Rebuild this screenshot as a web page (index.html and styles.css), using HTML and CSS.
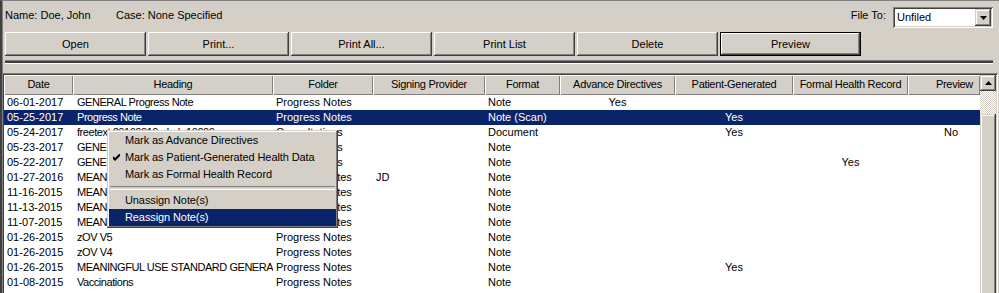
FILE: index.html
```html
<!DOCTYPE html>
<html>
<head>
<meta charset="utf-8">
<link rel="stylesheet" href="styles.css">
</head>
<body>
<div class="window">
  <div class="topbar">
    <span class="lbl name">Name: Doe, John</span>
    <span class="lbl case">Case: None Specified</span>
    <span class="spacer"></span>
    <span class="lbl fileto">File To:</span>
    <div class="combo">
      <span class="combo-text">Unfiled</span>
      <span class="combo-btn"><svg width="7" height="4" viewBox="0 0 7 4"><polygon points="0,0 7,0 3.5,4" fill="#000"/></svg></span>
    </div>
  </div>
  <div class="buttons">
    <button class="btn">Open</button>
    <button class="btn">Print...</button>
    <button class="btn">Print All...</button>
    <button class="btn">Print List</button>
    <button class="btn">Delete</button>
    <button class="btn default">Preview</button>
  </div>
  <div class="splitter"></div>
  <div class="list">
    <div class="list-main">
      <div class="row header">
        <span>Date</span><span>Heading</span><span>Folder</span><span>Signing Provider</span><span>Format</span><span>Advance Directives</span><span>Patient-Generated</span><span>Formal Health Record</span><span class="hprev">Preview</span>
      </div>
      <div class="row"><span>06-01-2017</span><span class="hd">GENERAL Progress Note</span><span>Progress Notes</span><span></span><span>Note</span><span class="c">Yes</span><span class="c"></span><span class="c"></span><span class="pv"></span></div>
      <div class="row sel"><span>05-25-2017</span><span class="hd">Progress Note</span><span>Progress Notes</span><span></span><span>Note (Scan)</span><span class="c"></span><span class="c">Yes</span><span class="c"></span><span class="pv"></span></div>
      <div class="row"><span>05-24-2017</span><span class="hd">freetext 20160010 - Lab 10000</span><span>Consultations</span><span></span><span>Document</span><span class="c"></span><span class="c">Yes</span><span class="c"></span><span class="pv">No</span></div>
      <div class="row"><span>05-23-2017</span><span class="hd">GENERAL Progress Note</span><span>Consultations</span><span></span><span>Note</span><span class="c"></span><span class="c"></span><span class="c"></span><span class="pv"></span></div>
      <div class="row"><span>05-22-2017</span><span class="hd">GENERAL Progress Note</span><span>Consultations</span><span></span><span>Note</span><span class="c"></span><span class="c"></span><span class="c">Yes</span><span class="pv"></span></div>
      <div class="row"><span>01-27-2016</span><span class="hd">MEANINGFUL USE STANDARD GENERA</span><span>Progress Notes</span><span>JD</span><span>Note</span><span class="c"></span><span class="c"></span><span class="c"></span><span class="pv"></span></div>
      <div class="row"><span>11-16-2015</span><span class="hd">MEANINGFUL USE STANDARD GENERA</span><span>Progress Notes</span><span></span><span>Note</span><span class="c"></span><span class="c"></span><span class="c"></span><span class="pv"></span></div>
      <div class="row"><span>11-13-2015</span><span class="hd">MEANINGFUL USE STANDARD GENERA</span><span>Progress Notes</span><span></span><span>Note</span><span class="c"></span><span class="c"></span><span class="c"></span><span class="pv"></span></div>
      <div class="row"><span>11-07-2015</span><span class="hd">MEANINGFUL USE STANDARD GENERA</span><span>Progress Notes</span><span></span><span>Note</span><span class="c"></span><span class="c"></span><span class="c"></span><span class="pv"></span></div>
      <div class="row"><span>01-26-2015</span><span class="hd">zOV V5</span><span>Progress Notes</span><span></span><span>Note</span><span class="c"></span><span class="c"></span><span class="c"></span><span class="pv"></span></div>
      <div class="row"><span>01-26-2015</span><span class="hd">zOV V4</span><span>Progress Notes</span><span></span><span>Note</span><span class="c"></span><span class="c"></span><span class="c"></span><span class="pv"></span></div>
      <div class="row"><span>01-26-2015</span><span class="hd">MEANINGFUL USE STANDARD GENERA</span><span>Progress Notes</span><span></span><span>Note</span><span class="c"></span><span class="c">Yes</span><span class="c"></span><span class="pv"></span></div>
      <div class="row"><span>01-08-2015</span><span class="hd">Vaccinations</span><span>Progress Notes</span><span></span><span>Note</span><span class="c"></span><span class="c"></span><span class="c"></span><span class="pv"></span></div>
    </div>
    <div class="scrollbar">
      <div class="sb-btn"><svg width="7" height="4" viewBox="0 0 7 4"><polygon points="3.5,0 7,4 0,4" fill="#000"/></svg></div>
      <div class="sb-track"></div>
      <div class="sb-thumb"></div>
    </div>
  </div>
  <div class="menu">
    <div class="mi">Mark as Advance Directives</div>
    <div class="mi"><svg class="check" width="7" height="7" viewBox="0 0 7 7"><path d="M0 2 L2 4 L7 -1 L7 2 L2 7 L0 5 Z" fill="#000"/></svg>Mark as Patient-Generated Health Data</div>
    <div class="mi">Mark as Formal Health Record</div>
    <div class="msep"></div>
    <div class="mi">Unassign Note(s)</div>
    <div class="mi hl">Reassign Note(s)</div>
  </div>
</div>
</body>
</html>
```

FILE: styles.css
```css
* { box-sizing: border-box; }
html, body { margin: 0; padding: 0; }
body {
  width: 999px;
  height: 293px;
  overflow: hidden;
  background: #d4d0c8;
  font-family: "Liberation Sans", Arial, sans-serif;
  font-size: 11px;
  color: #000;
}
.window {
  position: relative;
  width: 999px;
  height: 293px;
  border-top: 1px solid #808080;
  border-left: 2px solid #404040;
  box-shadow: inset 1px 0 #808080;
}
.topbar {
  display: flex;
  align-items: flex-start;
  height: 31px;
  padding: 0 6px 0 3px;
}
.lbl { line-height: 13px; margin-top: 8px; white-space: nowrap; }
.name { width: 111px; }
.spacer { flex: 1; }
.fileto { margin-right: 7px; }
.combo {
  margin-top: 6px;
  width: 100px;
  height: 21px;
  background: #fff;
  display: flex;
  align-items: center;
  padding: 2px;
  box-shadow: inset 1px 1px #808080, inset -1px -1px #fff, inset 2px 2px #404040, inset -2px -2px #d4d0c8;
}
.combo-text { flex: 1; padding-left: 2px; line-height: 13px; }
.combo-btn {
  width: 16px;
  height: 17px;
  background: #d4d0c8;
  display: flex;
  align-items: center;
  justify-content: center;
  box-shadow: inset -1px -1px #404040, inset 1px 1px #d4d0c8, inset -2px -2px #808080, inset 2px 2px #fff;
}
.buttons {
  display: flex;
  gap: 2px;
  padding-left: 3px;
  height: 24px;
}
.btn {
  width: 141px;
  height: 24px;
  margin: 0;
  padding: 0;
  border: 0;
  background: #d4d0c8;
  font-family: inherit;
  font-size: 11px;
  color: #000;
  box-shadow: inset -1px -1px #404040, inset 1px 1px #fff, inset -2px -2px #808080, inset 2px 2px #d4d0c8;
}
.btn.default {
  box-shadow: inset 0 0 0 1px #000, inset -2px -2px #404040, inset 2px 2px #fff, inset -3px -3px #808080;
}
.splitter {
  margin: 4px 6px 9px 3px;
  height: 4px;
  border-top: 1px solid #808080;
  border-bottom: 1px solid #fff;
  background: #404040;
}
.list {
  display: flex;
  width: 996px;
  height: 230px;
  padding: 2px;
  background: #fff;
  box-shadow: inset 1px 1px #808080, inset -1px -1px #fff, inset 2px 2px #404040, inset -2px -2px #d4d0c8;
}
.list-main { width: 976px; }
.row {
  display: grid;
  grid-template-columns: 69px 200px 100px 112px 75px 115px 118px 115px 72px;
  height: 15px;
  line-height: 15px;
}
.row > span {
  overflow: hidden;
  white-space: nowrap;
  padding-left: 3px;
}
.row > span.hd { padding-left: 4px; letter-spacing: -0.45px; }
.row > span.c { text-align: center; padding-left: 0; }
.row > span.pv { text-align: right; padding-right: 22px; }
.row.sel { background: #0a246a; color: #fff; }
.row.header {
  height: 20px;
  line-height: 19px;
  background: #d4d0c8;
}
.row.header > span {
  text-align: center;
  padding-left: 0;
  letter-spacing: -0.3px;
  box-shadow: inset 1px 1px #fff, inset -1px -1px #808080;
}
.row.header > span.hprev { text-align: right; padding-right: 7px; }
.scrollbar {
  width: 16px;
  display: flex;
  flex-direction: column;
}
.sb-btn {
  width: 16px;
  height: 16px;
  flex: none;
  background: #d4d0c8;
  display: flex;
  align-items: center;
  justify-content: center;
  box-shadow: inset -1px -1px #404040, inset 1px 1px #d4d0c8, inset -2px -2px #808080, inset 2px 2px #fff;
}
.sb-track {
  height: 23px;
  flex: none;
  background-color: #fff;
  background-image: conic-gradient(#d4d0c8 25%, #fff 0 50%, #d4d0c8 0 75%, #fff 0);
  background-size: 2px 2px;
}
.sb-thumb {
  height: 200px;
  flex: none;
  background: #d4d0c8;
  box-shadow: inset -1px -1px #404040, inset 1px 1px #d4d0c8, inset -2px -2px #808080, inset 2px 2px #fff;
}
.menu {
  position: absolute;
  left: 105px;
  top: 129px;
  width: 231px;
  padding: 2px;
  background: #d4d0c8;
  letter-spacing: -0.1px;
  box-shadow: inset -1px -1px #404040, inset 1px 1px #d4d0c8, inset -2px -2px #808080, inset 2px 2px #fff;
}
.mi {
  position: relative;
  height: 17px;
  line-height: 17px;
  padding-left: 16px;
  white-space: nowrap;
}
.mi.hl { background: #0a246a; color: #fff; }
.check { position: absolute; left: 4px; top: 5px; }
.msep {
  height: 9px;
  margin: 0 1px;
  padding-top: 3px;
}
.msep::before {
  content: "";
  display: block;
  height: 2px;
  border-top: 1px solid #808080;
  border-bottom: 1px solid #fff;
}
```
